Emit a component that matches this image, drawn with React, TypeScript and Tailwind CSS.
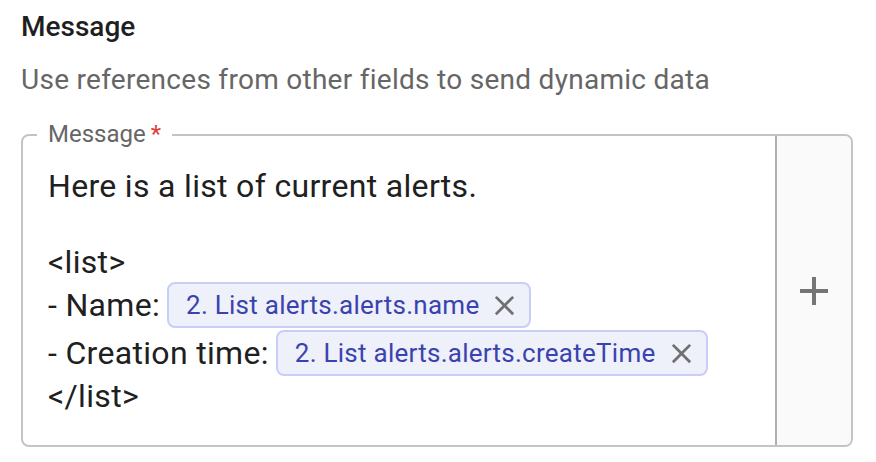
import React from "react";

const CloseIcon = () => (
  <svg viewBox="0 0 24 24" className="w-[33px] h-[33px] shrink-0" fill="#707070">
    <path d="M19 6.41 17.59 5 12 10.59 6.41 5 5 6.41 10.59 12 5 17.59 6.41 19 12 13.41 17.59 19 19 17.59 13.41 12z" />
  </svg>
);

const AddIcon = () => (
  <svg viewBox="0 0 24 24" className="w-[48px] h-[48px]" fill="#757575">
    <path d="M19 13h-6v6h-2v-6H5v-2h6V5h2v6h6z" />
  </svg>
);

function Chip({ label }: { label: string }) {
  return (
    <span className="ml-[7px] inline-flex items-center h-[46px] my-[1px] pl-[17px] pr-[8px] gap-[9px] rounded-[8px] border-2 border-[#c9cef6] bg-[#eef0fa] text-[26px] tracking-[0.01em] text-[#3a43ad] whitespace-nowrap">
      {label}
      <CloseIcon />
    </span>
  );
}

export default function App() {
  return (
    <div
      className="w-[876px] h-[462px] bg-white px-[21px] pt-[9px] text-[#202020]"
      style={{ fontFamily: "Roboto, 'Liberation Sans', sans-serif" }}
    >
      <h2 className="text-[28px] leading-[36px] font-medium text-[#1f1f1f]">Message</h2>
      <p className="mt-[17px] text-[28px] leading-[36px] tracking-[0.01em] text-[#666666]">
        Use references from other fields to send dynamic data
      </p>

      {/* Message field */}
      <div className="relative mt-[36px] w-[832px] flex border-2 border-[#c4c4c4] rounded-[8px]">
        <span className="absolute -top-[14px] left-[14px] bg-white px-[11px] text-[24px] leading-[24px] text-[#666666]">
          Message<span className="ml-[5px] text-[#e53935]">*</span>
        </span>

        <div className="flex-1 pt-[31px] pb-[30px] pl-[25px] text-[32px] leading-[38px] tracking-[0.01em]">
          <div className="h-[38px]">Here is a list of current alerts.</div>
          <div className="h-[38px]"></div>
          <div className="h-[38px]">&lt;list&gt;</div>
          <div className="flex items-center h-[48px]">
            <span>- Name:</span>
            <Chip label="2. List alerts.alerts.name" />
          </div>
          <div className="flex items-center h-[48px]">
            <span>- Creation time:</span>
            <Chip label="2. List alerts.alerts.createTime" />
          </div>
          <div className="h-[38px]">&lt;/list&gt;</div>
        </div>

        <div className="w-[76px] flex items-center justify-center bg-[#fafafa] border-l-2 border-[#b0b0b0] rounded-r-[6px]">
          <AddIcon />
        </div>
      </div>
    </div>
  );
}
